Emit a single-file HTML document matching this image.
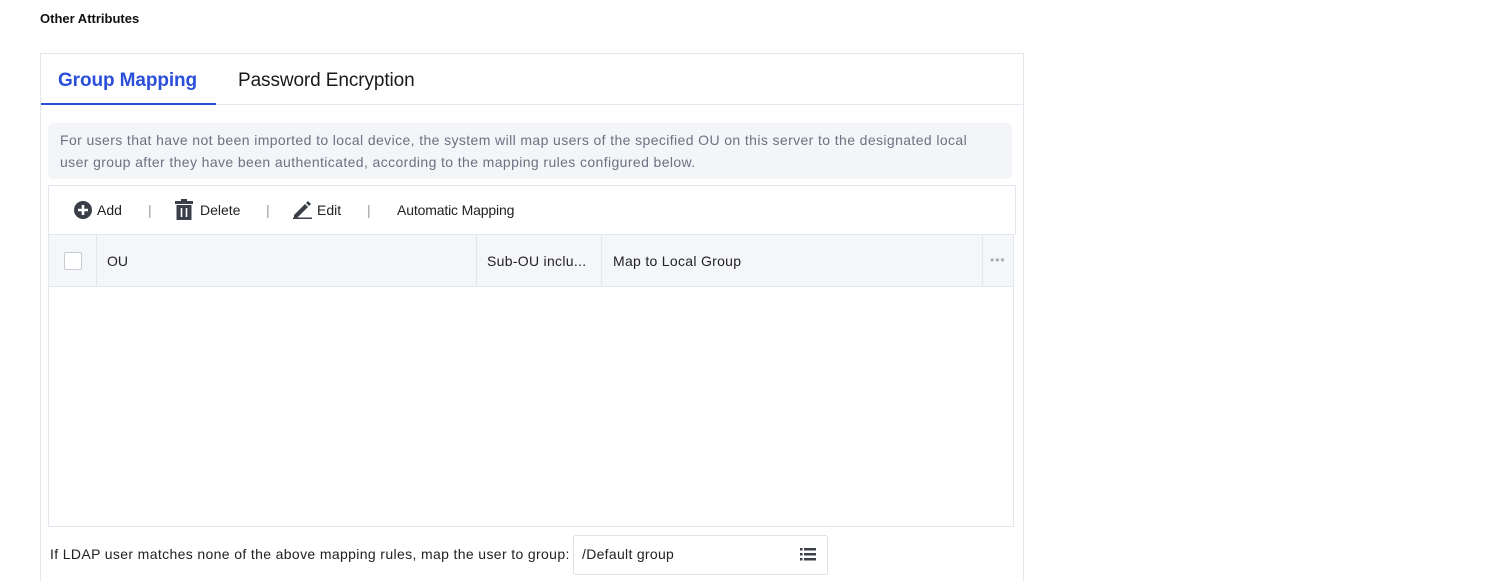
<!DOCTYPE html>
<html><head><meta charset="utf-8"><style>
*{box-sizing:border-box;margin:0;padding:0}
html,body{width:1493px;height:581px;overflow:hidden}
body{background:#fff;font-family:"Liberation Sans",Arial,sans-serif;position:relative;color:#222}
.a{position:absolute;white-space:nowrap}
</style></head><body>
<div class="a" style="left:40px;top:11px;font-size:13px;font-weight:bold;color:#111">Other Attributes</div>
<div class="a" style="left:40px;top:53px;width:984px;height:540px;border:1px solid #e3e6ec"></div>
<div class="a" style="left:41px;top:104px;width:982px;height:1px;background:#e3e6ec"></div>
<div class="a" style="left:41px;top:103px;width:175px;height:2px;background:#2a4fd9"></div>
<div class="a" style="left:58px;top:70px;font-size:19px;font-weight:bold;color:#2a4fd9;letter-spacing:-0.1px">Group Mapping</div>
<div class="a" style="left:238px;top:70px;font-size:19px;color:#1a1a1a;letter-spacing:-0.1px">Password Encryption</div>
<div class="a" style="left:48px;top:123px;width:964px;height:56px;background:#f3f5f9;border-radius:5px;padding:6px 12px;font-size:14px;line-height:22px;color:#6b7280;letter-spacing:0.39px">For users that have not been imported to local device, the system will map users of the specified OU on this server to the designated local<br>user group after they have been authenticated, according to the mapping rules configured below.</div>
<div class="a" style="left:48px;top:185px;width:968px;height:50px;border:1px solid #e3e6ec;border-bottom:none"></div>
<svg class="a" style="left:73px;top:200px" width="20" height="20" viewBox="0 0 20 20"><circle cx="10" cy="10" r="9" fill="#3a3f4a"/><path d="M10 5v10M5 10h10" stroke="#fff" stroke-width="2.6"/></svg>
<div class="a" style="left:97px;top:202px;font-size:14px">Add</div>
<div class="a" style="left:148px;top:202px;font-size:14px;color:#999">|</div>
<svg class="a" style="left:175px;top:199px" width="18" height="21" viewBox="0 0 18 21"><rect x="0" y="2" width="18" height="3" fill="#3a3f4a"/><rect x="6" y="0" width="6" height="3" fill="#3a3f4a"/><rect x="1.5" y="6" width="15" height="15" fill="#3a3f4a"/><path d="M6.5 9v9M11.5 9v9" stroke="#fff" stroke-width="1.6"/></svg>
<div class="a" style="left:200px;top:202px;font-size:14px">Delete</div>
<div class="a" style="left:266px;top:202px;font-size:14px;color:#999">|</div>
<svg class="a" style="left:293px;top:200px" width="20" height="19" viewBox="0 0 20 19"><path d="M1 15l11-11 3 3-11 11H1z" fill="#3a3f4a"/><path d="M13 3l2-2 3 3-2 2z" fill="#3a3f4a"/><rect x="0" y="17.5" width="19" height="1.5" fill="#3a3f4a"/></svg>
<div class="a" style="left:317px;top:202px;font-size:14px">Edit</div>
<div class="a" style="left:367px;top:202px;font-size:14px;color:#999">|</div>
<div class="a" style="left:397px;top:202px;font-size:14px;letter-spacing:-0.15px">Automatic Mapping</div>
<div class="a" style="left:48px;top:234px;width:966px;height:293px;border:1px solid #e3e6ec"></div>
<div class="a" style="left:49px;top:235px;width:964px;height:52px;background:#f4f6f9;border-bottom:1px solid #e3e6ec"></div>
<div class="a" style="left:96px;top:235px;width:1px;height:51px;background:#e3e6ec"></div>
<div class="a" style="left:476px;top:235px;width:1px;height:51px;background:#e3e6ec"></div>
<div class="a" style="left:601px;top:235px;width:1px;height:51px;background:#e3e6ec"></div>
<div class="a" style="left:982px;top:235px;width:1px;height:51px;background:#e3e6ec"></div>
<div class="a" style="left:64px;top:252px;width:18px;height:18px;border:1px solid #c8ccd3;background:#fff;border-radius:2px"></div>
<div class="a" style="left:107px;top:253px;font-size:14px">OU</div>
<div class="a" style="left:487px;top:253px;font-size:14px;letter-spacing:0.3px">Sub-OU inclu...</div>
<div class="a" style="left:613px;top:253px;font-size:14px;letter-spacing:0.3px">Map to Local Group</div>
<div class="a" style="left:990px;top:253px;font-size:12px;color:#aaa;letter-spacing:1px">•••</div>
<div class="a" style="left:50px;top:546px;font-size:14px;letter-spacing:0.36px">If LDAP user matches none of the above mapping rules, map the user to group:</div>
<div class="a" style="left:573px;top:535px;width:255px;height:40px;border:1px solid #dde0e6;border-radius:3px"></div>
<div class="a" style="left:582px;top:546px;font-size:14px;letter-spacing:0.3px">/Default group</div>
<svg class="a" style="left:800px;top:548px" width="16" height="13" viewBox="0 0 16 13"><g fill="#3a3f4a"><rect x="0" y="0" width="2.5" height="2.5"/><rect x="4" y="0" width="12" height="2.5"/><rect x="0" y="5" width="2.5" height="2.5"/><rect x="4" y="5" width="12" height="2.5"/><rect x="0" y="10" width="2.5" height="2.5"/><rect x="4" y="10" width="12" height="2.5"/></g></svg>
</body></html>
